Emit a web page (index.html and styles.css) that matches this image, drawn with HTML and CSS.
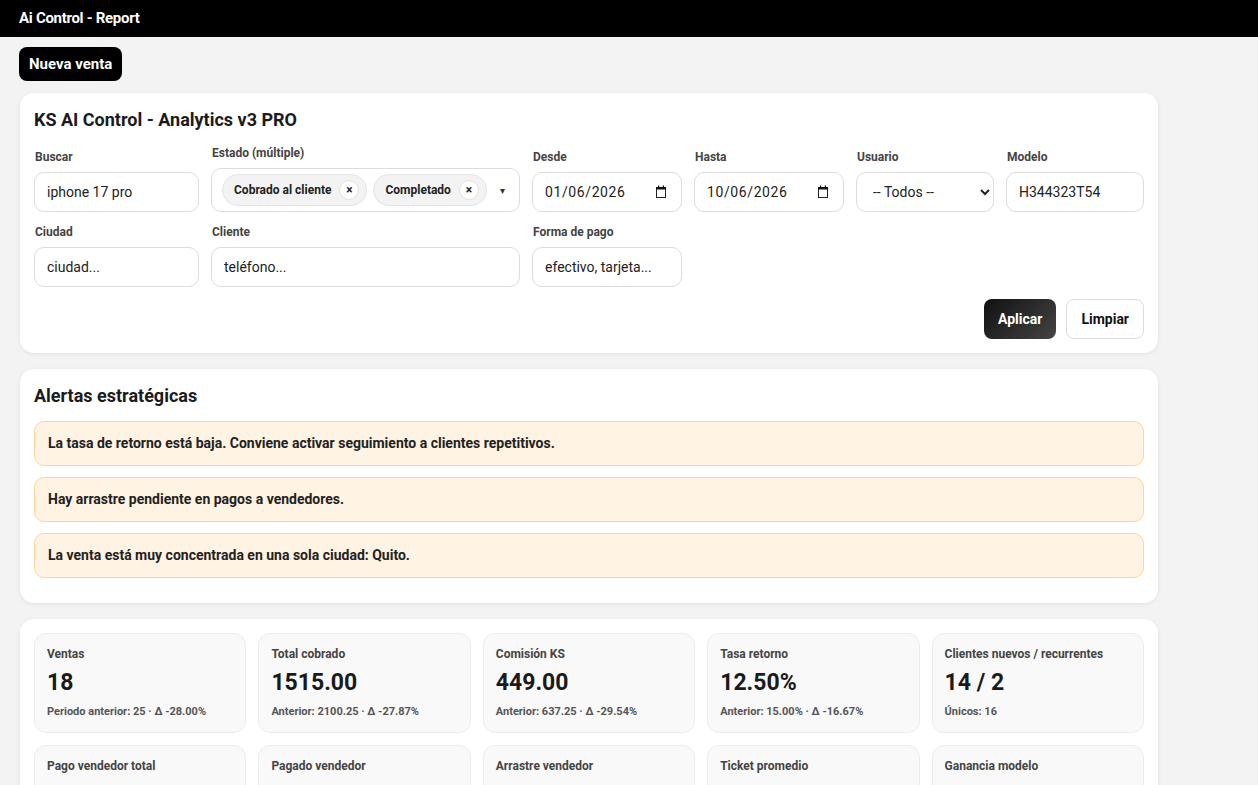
FILE: index.html
```html
<!DOCTYPE html>
<html lang="es">
<head>
    <meta charset="utf-8">
    <title>Ai Control - Report</title>
    <link rel="stylesheet" href="styles.css">
</head>
<body>

    <header class="topbar">Ai Control - Report</header>

    <main class="page">
        <button class="btn-new">Nueva venta</button>

        <section class="card">
            <h2 class="card-title">KS AI Control - Analytics v3 PRO</h2>

            <div class="filters">
                <div class="field">
                    <label>Buscar</label>
                    <input type="text" value="iphone 17 pro">
                </div>
                <div class="field">
                    <label>Estado (múltiple)</label>
                    <div class="multi">
                        <span class="chip">Cobrado al cliente <i class="chip-x">×</i></span>
                        <span class="chip">Completado <i class="chip-x">×</i></span>
                        <span class="multi-arrow">▾</span>
                    </div>
                </div>
                <div class="field">
                    <label>Desde</label>
                    <div class="date-box">
                        <input type="text" value="01/06/2026">
                        <svg class="cal" width="12" height="14" viewBox="0 0 12 14">
                            <rect x="1.5" y="2.5" width="9" height="10" fill="none" stroke="#222" stroke-width="1"/>
                            <rect x="1" y="2" width="10" height="2.5" fill="#111"/>
                            <rect x="3" y="0.5" width="1.2" height="2" fill="#111"/>
                            <rect x="7.8" y="0.5" width="1.2" height="2" fill="#111"/>
                        </svg>
                    </div>
                </div>
                <div class="field">
                    <label>Hasta</label>
                    <div class="date-box">
                        <input type="text" value="10/06/2026">
                        <svg class="cal" width="12" height="14" viewBox="0 0 12 14">
                            <rect x="1.5" y="2.5" width="9" height="10" fill="none" stroke="#222" stroke-width="1"/>
                            <rect x="1" y="2" width="10" height="2.5" fill="#111"/>
                            <rect x="3" y="0.5" width="1.2" height="2" fill="#111"/>
                            <rect x="7.8" y="0.5" width="1.2" height="2" fill="#111"/>
                        </svg>
                    </div>
                </div>
                <div class="field">
                    <label>Usuario</label>
                    <select><option>-- Todos --</option></select>
                </div>
                <div class="field">
                    <label>Modelo</label>
                    <input type="text" value="H344323T54">
                </div>

                <div class="field">
                    <label>Ciudad</label>
                    <input type="text" placeholder="ciudad...">
                </div>
                <div class="field">
                    <label>Cliente</label>
                    <input type="text" placeholder="teléfono...">
                </div>
                <div class="field">
                    <label>Forma de pago</label>
                    <input type="text" placeholder="efectivo, tarjeta...">
                </div>
            </div>

            <div class="actions">
                <button class="btn-apply">Aplicar</button>
                <button class="btn-clear">Limpiar</button>
            </div>
        </section>

        <section class="card">
            <h2 class="card-title">Alertas estratégicas</h2>
            <div class="alerts">
                <div class="alert">La tasa de retorno está baja. Conviene activar seguimiento a clientes repetitivos.</div>
                <div class="alert">Hay arrastre pendiente en pagos a vendedores.</div>
                <div class="alert">La venta está muy concentrada en una sola ciudad: Quito.</div>
            </div>
        </section>

        <section class="card">
            <div class="kpis">
                <div class="kpi">
                    <div class="kpi-label">Ventas</div>
                    <div class="kpi-value">18</div>
                    <div class="kpi-sub">Periodo anterior: 25 · Δ -28.00%</div>
                </div>
                <div class="kpi">
                    <div class="kpi-label">Total cobrado</div>
                    <div class="kpi-value">1515.00</div>
                    <div class="kpi-sub">Anterior: 2100.25 · Δ -27.87%</div>
                </div>
                <div class="kpi">
                    <div class="kpi-label">Comisión KS</div>
                    <div class="kpi-value">449.00</div>
                    <div class="kpi-sub">Anterior: 637.25 · Δ -29.54%</div>
                </div>
                <div class="kpi">
                    <div class="kpi-label">Tasa retorno</div>
                    <div class="kpi-value">12.50%</div>
                    <div class="kpi-sub">Anterior: 15.00% · Δ -16.67%</div>
                </div>
                <div class="kpi">
                    <div class="kpi-label">Clientes nuevos / recurrentes</div>
                    <div class="kpi-value">14 / 2</div>
                    <div class="kpi-sub">Únicos: 16</div>
                </div>

                <div class="kpi">
                    <div class="kpi-label">Pago vendedor total</div>
                    <div class="kpi-value">1066.00</div>
                    <div class="kpi-sub">Periodo actual</div>
                </div>
                <div class="kpi">
                    <div class="kpi-label">Pagado vendedor</div>
                    <div class="kpi-value">820.00</div>
                    <div class="kpi-sub">Periodo actual</div>
                </div>
                <div class="kpi">
                    <div class="kpi-label">Arrastre vendedor</div>
                    <div class="kpi-value">246.00</div>
                    <div class="kpi-sub">Pendiente</div>
                </div>
                <div class="kpi">
                    <div class="kpi-label">Ticket promedio</div>
                    <div class="kpi-value">84.17</div>
                    <div class="kpi-sub">Por venta</div>
                </div>
                <div class="kpi">
                    <div class="kpi-label">Ganancia modelo</div>
                    <div class="kpi-value">449.00</div>
                    <div class="kpi-sub">Modelo: H344323T54</div>
                </div>
            </div>
        </section>
    </main>

</body>
</html>
```

FILE: styles.css
```css
body {
    margin: 0;
    padding: 0;
    background: #f3f3f3;
    font-family: Roboto, "Liberation Sans", sans-serif;
    color: #1a1a1a;
}

.topbar {
    background: #000;
    color: #fff;
    height: 37px;
    line-height: 37px;
    padding: 0 19px;
    font-weight: 700;
    font-size: 15px;
    letter-spacing: -0.3px;
}

.page {
    width: 1138px;
    padding: 10px 20px 20px;
}

.btn-new {
    background: #000;
    color: #fff;
    border: 0;
    border-radius: 8px;
    height: 34px;
    padding: 0 10px;
    margin-left: -1px;
    font-family: inherit;
    font-size: 15px;
    font-weight: 700;
    margin-bottom: 12px;
    cursor: pointer;
}

.card {
    background: #fff;
    border-radius: 14px;
    padding: 14px;
    margin-bottom: 16px;
    box-shadow: 0 1px 4px rgba(0, 0, 0, 0.08);
}

.card-title {
    margin: 2px 0 15px;
    font-size: 18px;
    font-weight: 700;
    color: #1b1b1b;
}

/* filter grid */
.filters {
    display: grid;
    grid-template-columns: 165px 309px 150px 150px 138px 138px;
    column-gap: 12px;
    row-gap: 13px;
    align-items: end;
    padding-top: 1px;
}

.field label {
    display: block;
    font-size: 12px;
    font-weight: 700;
    color: #444;
    margin-bottom: 8px;
    padding-left: 1px;
}

.field input,
.field select {
    box-sizing: border-box;
    width: 100%;
    height: 40px;
    border: 1px solid #dcdcdc;
    border-radius: 10px;
    padding: 0 12px;
    font-family: inherit;
    font-size: 14px;
    color: #222;
    background: #fff;
}

.field input::placeholder {
    color: #222;
}

.date-box {
    position: relative;
}

.date-box input {
    letter-spacing: 0.6px;
}

/* calendar glyph sits over the right end of the date field */
.date-box .cal {
    position: absolute;
    right: 15px;
    top: 13px;
}

.multi {
    box-sizing: border-box;
    height: 44px;
    border: 1px solid #dcdcdc;
    border-radius: 10px;
    display: flex;
    align-items: center;
    gap: 6px;
    padding: 0 10px;
}

.chip {
    display: inline-flex;
    align-items: center;
    gap: 8px;
    height: 30px;
    padding: 0 7px 0 11px;
    background: #f3f3f3;
    border: 1px solid #e4e4e4;
    border-radius: 16px;
    font-size: 12px;
    font-weight: 700;
    color: #222;
}

.chip-x {
    font-style: normal;
    width: 18px;
    height: 18px;
    border-radius: 50%;
    background: #fff;
    border: 1px solid #e0e0e0;
    display: inline-flex;
    align-items: center;
    justify-content: center;
    font-size: 12px;
}

.multi-arrow {
    margin-left: auto;
    font-size: 10px;
    color: #333;
    padding-right: 4px;
}

.actions {
    display: flex;
    justify-content: flex-end;
    gap: 10px;
    margin-top: 12px;
}

.actions button {
    height: 40px;
    border-radius: 8px;
    font-family: inherit;
    font-size: 14px;
    font-weight: 700;
    padding: 0 14px;
    cursor: pointer;
}

.btn-apply {
    background: linear-gradient(135deg, #111, #444);
    color: #fff;
    border: 0;
}

.btn-clear {
    background: #fff;
    color: #111;
    border: 1px solid #dcdcdc;
}

/* alerts */
.alerts {
    display: flex;
    flex-direction: column;
    gap: 11px;
    margin-bottom: 11px;
}

.alert {
    background: #fff3e3;
    border: 1px solid #ffd59c;
    border-radius: 10px;
    padding: 13px 13px 14px;
    font-size: 14px;
    font-weight: 700;
    color: #222;
}

/* kpi grid */
.kpis {
    display: grid;
    grid-template-columns: repeat(5, 1fr);
    gap: 12px;
}

.kpi {
    background: #f9f9f9;
    border: 1px solid #ececec;
    border-radius: 12px;
    padding: 13px 12px 14px;
}

.kpi-label {
    font-size: 12px;
    line-height: 14px;
    font-weight: 700;
    color: #444;
}

.kpi-value {
    font-size: 23px;
    line-height: 28px;
    font-weight: 700;
    color: #1a1a1a;
    margin: 8px 0;
}

.kpi-sub {
    font-size: 11px;
    line-height: 13px;
    font-weight: 700;
    color: #555;
}
```
